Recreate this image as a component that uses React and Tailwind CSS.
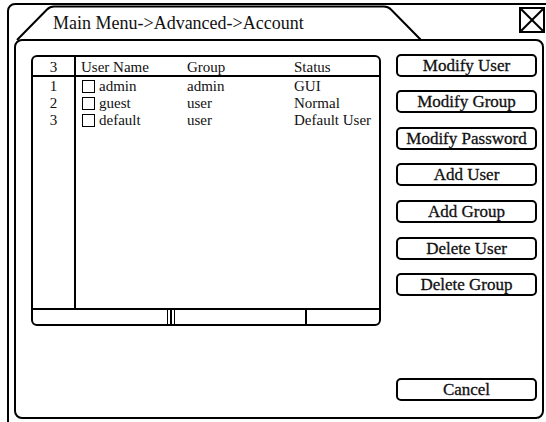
import React from "react";

const rows = [
  { n: "1", name: "admin", group: "admin", status: "GUI" },
  { n: "2", name: "guest", group: "user", status: "Normal" },
  { n: "3", name: "default", group: "user", status: "Default User" },
];

const buttons = [
  { label: "Modify User", mt: "mt-0" },
  { label: "Modify Group", mt: "mt-[13px]" },
  { label: "Modify Password", mt: "mt-[14px]" },
  { label: "Add User", mt: "mt-[13px]" },
  { label: "Add Group", mt: "mt-[14px]" },
  { label: "Delete User", mt: "mt-[14px]" },
  { label: "Delete Group", mt: "mt-[13px]" },
];

function Btn({ label, className = "" }) {
  return (
    <div
      className={`h-[23px] w-full border-2 border-black rounded-[5px] flex items-center justify-center text-[17px] leading-none text-[#111] [-webkit-text-stroke:0.3px_#111] ${className}`}
    >
      {label}
    </div>
  );
}

export default function App() {
  return (
    <div className="relative w-[546px] h-[422px] overflow-hidden bg-white font-[Liberation_Serif,Times_New_Roman,serif] text-[#111]">
      {/* outer window frame */}
      <div className="ml-[7px] mt-[3px] w-[560px] h-[440px] rounded-[8px] border-2 border-black flex flex-col">
        {/* header */}
        <div className="h-[34px] flex items-start">
          <div className="pl-[44px] pt-[8px] text-[18px] leading-[20px]">
            Main Menu-&gt;Advanced-&gt;Account
          </div>
          <div className="ml-auto mr-[20px] mt-[2px] w-[26px] h-[26px] border-2 border-black">
            <svg width="22" height="22" viewBox="0 0 22 22" className="block">
              <line x1="0" y1="0" x2="22" y2="22" stroke="#000" strokeWidth="2" />
              <line x1="22" y1="0" x2="0" y2="22" stroke="#000" strokeWidth="2" />
            </svg>
          </div>
        </div>
        {/* inner panel */}
        <div className="ml-[5px] w-[530px] h-[380px] border-2 border-black rounded-[8px] flex items-stretch pl-[15px] pt-[13px] pb-[16px]">
          {/* table */}
          <div className="mt-[1px] w-[350px] h-[271px] border-2 border-black rounded-[6px] flex flex-col text-[15px] leading-none">
            <div className="flex h-[20px] border-b-2 border-black">
              <div className="w-[43px] border-r-2 border-black flex items-center justify-center pt-[2px]">3</div>
              <div className="flex items-center pl-[5px] pt-[2px]">
                <div className="w-[106px]">User Name</div>
                <div className="w-[107px]">Group</div>
                <div>Status</div>
              </div>
            </div>
            <div className="flex-1 flex">
              <div className="w-[43px] border-r-2 border-black flex flex-col pt-[1px]">
                {rows.map((r) => (
                  <div key={r.n} className="h-[17px] flex items-center justify-center">{r.n}</div>
                ))}
              </div>
              <div className="flex-1 flex flex-col pl-[5px] pt-[1px]">
                {rows.map((r) => (
                  <div key={r.n} className="h-[17px] flex items-center">
                    <div className="w-[106px] flex items-center">
                      <span className="ml-[1px] w-[13px] h-[13px] border-[1.5px] border-black inline-block" />
                      <span className="ml-[4px]">{r.name}</span>
                    </div>
                    <div className="w-[107px]">{r.group}</div>
                    <div>{r.status}</div>
                  </div>
                ))}
              </div>
            </div>
            {/* scrollbar */}
            <div className="h-[16px] border-t-2 border-black flex">
              <div className="w-[134px]" />
              <div className="w-[8px] border-x-[1.5px] border-black flex justify-center">
                <div className="w-[1.5px] h-full bg-black" />
              </div>
              <div className="w-[132px] border-r-2 border-black" />
              <div className="flex-1" />
            </div>
          </div>
          {/* buttons */}
          <div className="ml-[15px] w-[141px] flex flex-col">
            {buttons.map((b) => (
              <Btn key={b.label} label={b.label} className={b.mt} />
            ))}
            <Btn label="Cancel" className="mt-auto" />
          </div>
        </div>
      </div>
      {/* tab outline */}
      <svg
        className="absolute left-0 top-0 pointer-events-none"
        width="546"
        height="422"
        viewBox="0 0 546 422"
      >
        <path
          d="M 17 40 L 47 9.5 Q 50 6.5 54 6.5 L 384 6.5 Q 388 6.5 391 9.5 L 421 40"
          fill="none"
          stroke="#000"
          strokeWidth="2"
        />
      </svg>
    </div>
  );
}
